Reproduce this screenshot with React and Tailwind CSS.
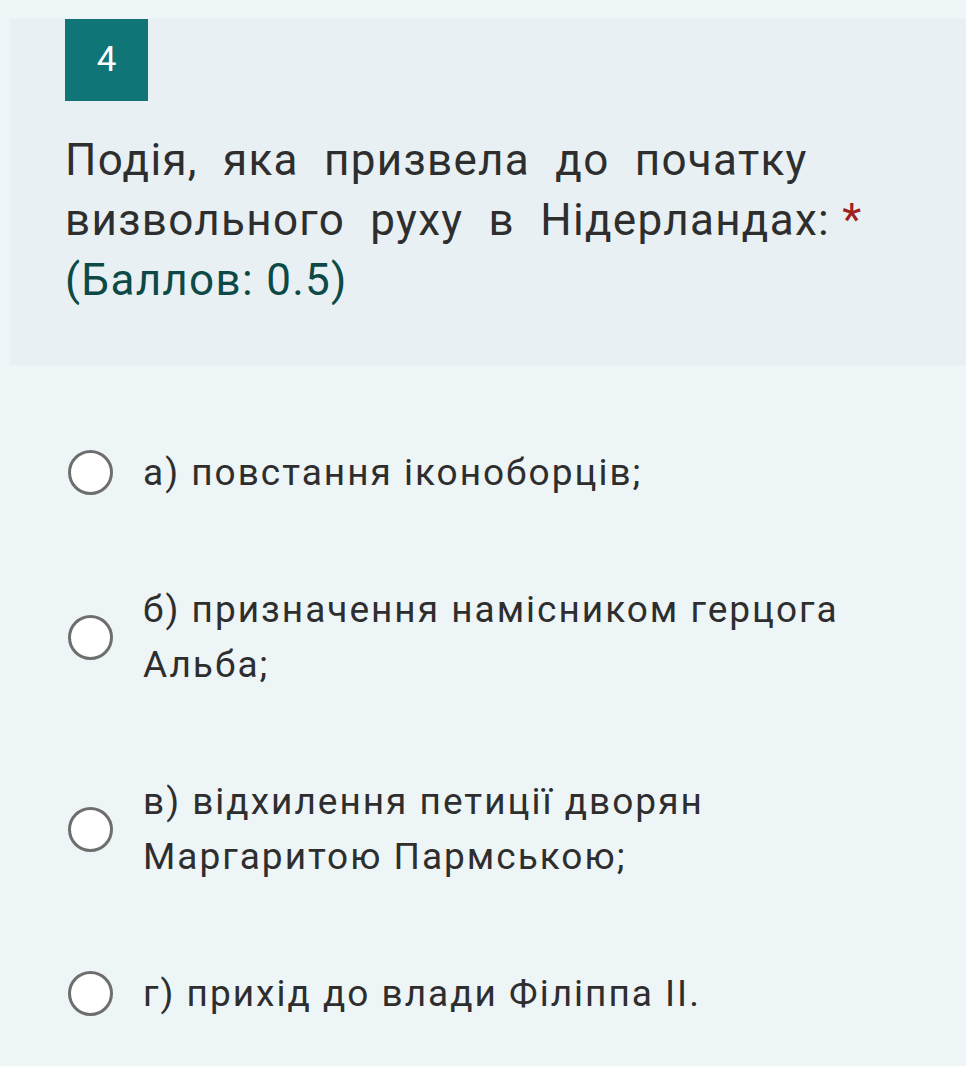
import React from "react";

const options = [
  "а) повстання іконоборців;",
  "б) призначення намісником герцога Альба;",
  "в) відхилення петиції дворян Маргаритою Пармською;",
  "г) прихід до влади Філіппа ІІ.",
];

const Radio = () => (
  <span className="block shrink-0 w-[45px] h-[45px] rounded-full border-[3px] border-[#6e6e6e] bg-white" />
);

const App = () => {
  return (
    <div
      className="w-[966px] h-[1066px] bg-[#eef5f6] pt-[19px] overflow-hidden"
      style={{ fontFamily: "Roboto, 'Noto Sans', sans-serif" }}
    >
      {/* question header */}
      <div className="ml-[10px] h-[346px] bg-[#e8f0f3] pl-[55px] pr-[40px]">
        <div className="w-[83px] h-[82px] bg-[#0f7577] text-white text-[35px] flex items-center justify-center">
          4
        </div>
        <p className="mt-[29px] text-[44px] leading-[60px] tracking-[1.3px] text-[#2e2e2e] [word-spacing:13px]">
          Подія, яка призвела до початку
          <br />
          визвольного руху в Нідерландах:
          <span className="text-[#a11f1f] [word-spacing:0px]"> *</span>
          <br />
          <span className="text-[#0d4a47] [word-spacing:0px]">(Баллов: 0.5)</span>
        </p>
      </div>

      {/* answer options */}
      <div className="mt-[80px] pl-[68px] pr-[86px] flex flex-col gap-[82px]">
        {options.map((o) => (
          <label key={o} className="flex items-center gap-[30px]">
            <Radio />
            <span className="text-[37px] leading-[55px] tracking-[2px] text-[#2e2e2e]">{o}</span>
          </label>
        ))}
      </div>
    </div>
  );
};

export default App;
